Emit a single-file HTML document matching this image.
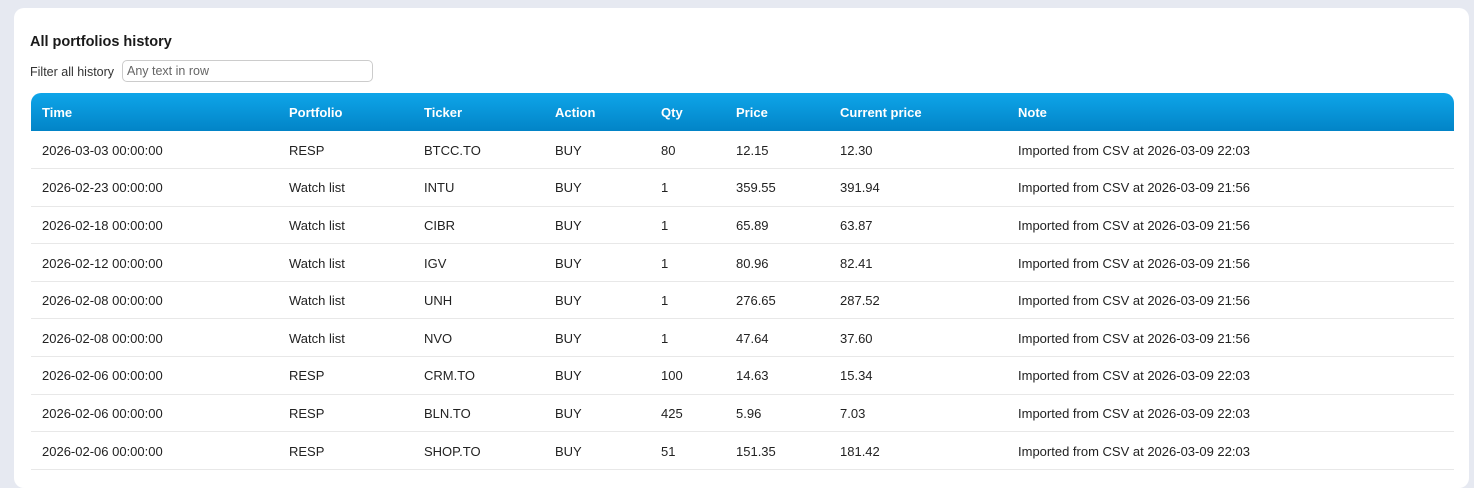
<!DOCTYPE html>
<html><head><style>
body{margin:0;background:#e6e9f1;font-family:"Liberation Sans",sans-serif;width:1474px;height:471px;overflow:hidden;}
.card{position:absolute;left:14px;top:8px;width:1455px;height:480px;background:#fff;border-radius:10px;}
h2{position:absolute;left:16px;top:26px;margin:0;font-size:14.5px;font-weight:bold;color:#1a1a1a;}
.f{position:absolute;left:16px;top:57px;font-size:12.5px;color:#333;}
.in{position:absolute;left:108px;top:52px;width:245px;height:20px;border:1px solid #ccc;border-radius:5px;font-size:12.5px;color:#666;line-height:20px;padding-left:4px;}
table{position:absolute;left:17px;top:85px;width:1423px;border-collapse:collapse;font-size:13px;color:#222;}
th{background:linear-gradient(#0ea5e9,#0284c7);color:#fff;text-align:left;height:37px;padding:1px 0 0 11px;font-weight:bold;}
th:first-child{border-top-left-radius:10px}th:last-child{border-top-right-radius:10px}
td{height:36.6px;padding:1px 0 0 11px;border-bottom:1px solid #e8e8e8;box-sizing:border-box;}
tr td{height:37.6px}
</style></head><body><div class="card">
<h2>All portfolios history</h2><div class="f">Filter all history</div><div class="in">Any text in row</div>
<table><colgroup><col style="width:247px"><col style="width:135px"><col style="width:131px"><col style="width:106px"><col style="width:75px"><col style="width:104px"><col style="width:178px"><col></colgroup>
<tr><th>Time</th><th>Portfolio</th><th>Ticker</th><th>Action</th><th>Qty</th><th>Price</th><th>Current price</th><th>Note</th></tr>
<tr><td>2026-03-03 00:00:00</td><td>RESP</td><td>BTCC.TO</td><td>BUY</td><td>80</td><td>12.15</td><td>12.30</td><td>Imported from CSV at 2026-03-09 22:03</td></tr>
<tr><td>2026-02-23 00:00:00</td><td>Watch list</td><td>INTU</td><td>BUY</td><td>1</td><td>359.55</td><td>391.94</td><td>Imported from CSV at 2026-03-09 21:56</td></tr>
<tr><td>2026-02-18 00:00:00</td><td>Watch list</td><td>CIBR</td><td>BUY</td><td>1</td><td>65.89</td><td>63.87</td><td>Imported from CSV at 2026-03-09 21:56</td></tr>
<tr><td>2026-02-12 00:00:00</td><td>Watch list</td><td>IGV</td><td>BUY</td><td>1</td><td>80.96</td><td>82.41</td><td>Imported from CSV at 2026-03-09 21:56</td></tr>
<tr><td>2026-02-08 00:00:00</td><td>Watch list</td><td>UNH</td><td>BUY</td><td>1</td><td>276.65</td><td>287.52</td><td>Imported from CSV at 2026-03-09 21:56</td></tr>
<tr><td>2026-02-08 00:00:00</td><td>Watch list</td><td>NVO</td><td>BUY</td><td>1</td><td>47.64</td><td>37.60</td><td>Imported from CSV at 2026-03-09 21:56</td></tr>
<tr><td>2026-02-06 00:00:00</td><td>RESP</td><td>CRM.TO</td><td>BUY</td><td>100</td><td>14.63</td><td>15.34</td><td>Imported from CSV at 2026-03-09 22:03</td></tr>
<tr><td>2026-02-06 00:00:00</td><td>RESP</td><td>BLN.TO</td><td>BUY</td><td>425</td><td>5.96</td><td>7.03</td><td>Imported from CSV at 2026-03-09 22:03</td></tr>
<tr><td>2026-02-06 00:00:00</td><td>RESP</td><td>SHOP.TO</td><td>BUY</td><td>51</td><td>151.35</td><td>181.42</td><td>Imported from CSV at 2026-03-09 22:03</td></tr>
</table></div></body></html>
